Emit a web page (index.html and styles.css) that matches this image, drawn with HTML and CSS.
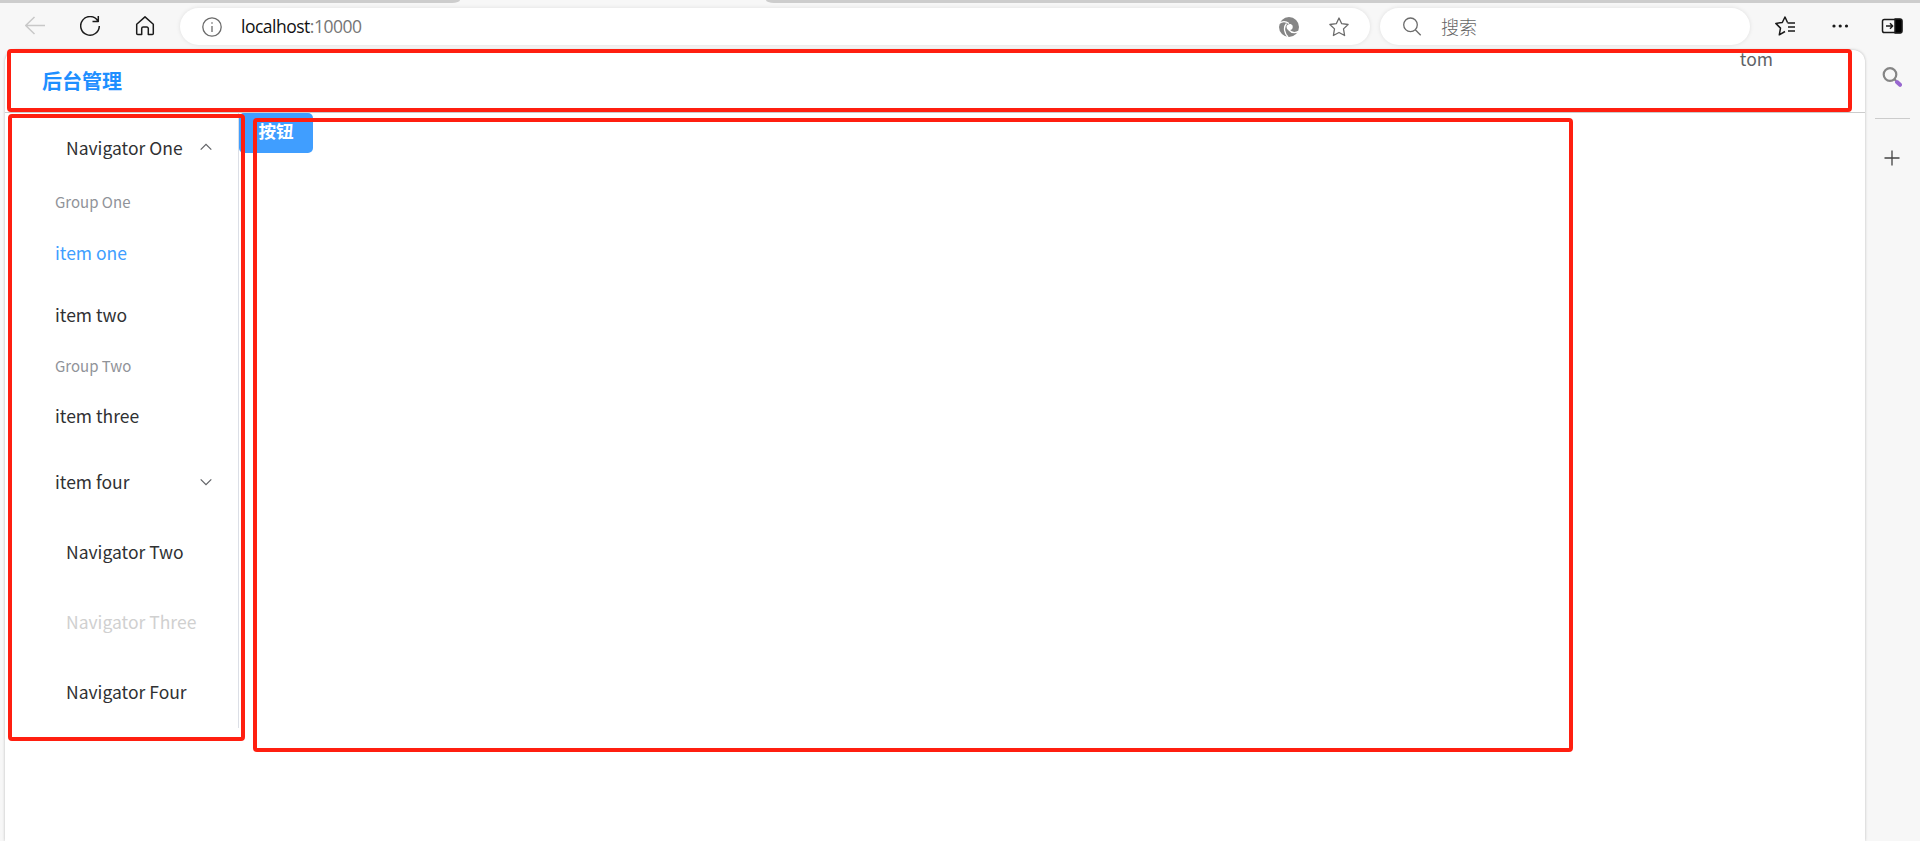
FILE: index.html
```
<!DOCTYPE html>
<html lang="zh-CN">
<head>
    <meta charset="UTF-8">
    <meta name="viewport" content="width=device-width, initial-scale=1.0">
    <title>后台管理</title>
    <link rel="stylesheet" href="styles.css">
</head>
<body>

<!-- Browser tabs and toolbar -->
<div class="tabs">
    <div class="tab tab-left"></div>
    <div class="tab tab-right"></div>
</div>
<div class="toolbar">
    <div class="nav-buttons">
        <svg class="icon back" viewBox="0 0 20 20"><path d="M20 9.5H.7M9.5 1L.7 9.5 9.5 18"/></svg>
        <svg class="icon" viewBox="0 0 20 20"><path d="M17.8 4.8A9.3 9.3 0 1 0 19.3 10M18.3 0v5.5h-5.8"/></svg>
        <svg class="icon" viewBox="0 0 20 20"><path d="M1.7 8.2L10 .9l8.3 7.3v9.3a1 1 0 0 1-1 1h-4v-6a1.5 1.5 0 0 0-1.5-1.5H8.2a1.5 1.5 0 0 0-1.5 1.5v6h-4a1 1 0 0 1-1-1z"/></svg>
    </div>
    <div class="address-bar">
        <svg class="icon gray" viewBox="0 0 20 20"><circle cx="10" cy="10" r="9.2"/><path d="M10 9v6M10 5.2v1.6"/></svg>
        <span class="url">localhost<span class="port">:10000</span></span>
        <svg class="icon swirl" viewBox="0 0 20 20">
            <circle cx="10" cy="10" r="10"/>
            <path class="cut" d="M0 6.500C3 4.300 7 4.300 10 6.500M7.500 6.500C4 10.500 5.500 16.500 9 20M20 14C16 16.500 12 15.500 9.500 12.500"/>
            <path class="hole" d="M7.500 9.500C8 6.500 12.500 6 13.500 8.500C14.500 12 12 13.500 9.500 13C8 12.500 7.500 11 7.500 9.500z"/>
        </svg>
        <svg class="icon gray" viewBox="0 0 20 20"><path d="M10 1l2.700 5.700 6.400.8-4.600 4.400 1.100 6.600L10 15.500l-5.600 3 1.100-6.600L.9 7.500l6.400-.8z"/></svg>
    </div>
    <div class="search-bar">
        <svg class="icon gray" viewBox="0 0 20 20"><circle cx="8.500" cy="7.800" r="6.800"/><path d="M13.300 12.700l5.400 5.600"/></svg>
        <span class="placeholder">搜索</span>
    </div>
    <div class="tool-buttons">
        <svg class="icon" viewBox="0 0 20 20"><path d="M12.500 6.500L10 1 7.300 6.500.8 7.400l4.700 4.700-1.200 6.700 5.700-3.300M12.500 7H20M13 11h7M13 15h7"/></svg>
        <svg class="icon dots" viewBox="0 0 20 20"><circle cx="4" cy="10" r="1.600"/><circle cx="10.200" cy="10" r="1.600"/><circle cx="16.500" cy="10" r="1.600"/></svg>
        <svg class="icon panel" viewBox="0 0 22 20"><rect x="1.500" y="3.500" width="19" height="13" rx="1.800"/><path d="M5 10h6.500M9 7.300l2.700 2.700L9 12.700"/><path class="fill" d="M14 3h5a2 2 0 0 1 2 2v10a2 2 0 0 1-2 2h-5z"/></svg>
    </div>
</div>

<div class="main">
    <!-- Web page -->
    <div class="page">
        <div class="header">
            <div class="title">后台管理</div>
            <div class="user">tom</div>
        </div>
        <div class="container">
            <ul class="menu">
                <li class="submenu">Navigator One
                    <svg class="arrow" viewBox="0 0 12 8"><path d="M.7 6.700L6 1.300l5.300 5.400"/></svg>
                </li>
                <li class="group">Group One</li>
                <li class="item active">item one</li>
                <li class="item">item two</li>
                <li class="group">Group Two</li>
                <li class="item">item three</li>
                <li class="submenu inner">item four
                    <svg class="arrow" viewBox="0 0 12 8"><path d="M.7 1.300L6 6.700l5.300-5.400"/></svg>
                </li>
                <li class="submenu">Navigator Two</li>
                <li class="submenu disabled">Navigator Three</li>
                <li class="submenu">Navigator Four</li>
            </ul>
            <button class="btn">按钮</button>
        </div>
    </div>

    <!-- Browser sidebar -->
    <div class="sidebar">
        <svg class="magnifier" viewBox="0 0 20 20"><circle cx="8" cy="7.500" r="6.300"/><path d="M12.200 12l2 2"/><path class="handle" d="M15 15l3 2.800"/></svg>
        <hr>
        <svg class="plus" viewBox="0 0 16 16"><path d="M8 .5v15M.5 8h15"/></svg>
    </div>
</div>

<!-- Region marks -->
<div class="mark mark-header"></div>
<div class="mark mark-menu"></div>
<div class="mark mark-content"></div>

</body>
</html>
```
FILE: styles.css
```
* {
    box-sizing: border-box;
}
body {
    margin: 0;
    height: 841px;
    overflow: hidden;
    display: flex;
    flex-direction: column;
    background-color: #f7f7f7;
    font-family: "Noto Sans CJK SC", sans-serif;
}

/* Browser top */
.tabs {
    display: flex;
    justify-content: space-between;
    height: 3px;
}
.tab {
    background-color: #cdcdcd;
}
.tab-left {
    width: 460px;
    border-bottom-right-radius: 8px 3px;
}
.tab-right {
    width: 1154px;
    border-bottom-left-radius: 8px 3px;
}
.toolbar {
    display: flex;
    height: 47px;
    padding: 5px 17px 0 25px;
}
.icon {
    width: 20px;
    height: 20px;
    flex: none;
    fill: none;
    stroke: #1b1b1b;
    stroke-width: 1.5;
    stroke-linejoin: round;
}
.nav-buttons {
    display: flex;
    gap: 35px;
    width: 155px;
    padding-top: 8px;
}
.back {
    stroke: #c8c8c8;
}
.gray {
    stroke: #6b6b6b;
    stroke-width: 1.3;
}
.address-bar,
.search-bar {
    display: flex;
    align-items: center;
    height: 37px;
    border-radius: 19px;
    background: white;
    box-shadow: 0 0 4px rgba(0, 0, 0, 0.1);
}
.address-bar {
    width: 1190px;
    padding: 0 21px 0 22px;
    gap: 30px;
}
.url {
    flex: 1;
    margin-left: -11px;
    padding-bottom: 2px;
    font-family: "Open Sans", sans-serif;
    font-size: 17.5px;
    letter-spacing: -0.5px;
    color: #111;
}
.port {
    color: #767676;
}
.swirl {
    fill: #858585;
    stroke: none;
}
.swirl .cut {
    fill: none;
    stroke: white;
    stroke-width: 1.3;
}
.swirl .hole {
    fill: white;
}
.search-bar {
    width: 370px;
    margin-left: 10px;
    padding-left: 22px;
    gap: 19px;
    font-size: 18px;
    font-weight: 300;
    color: #666;
}
.placeholder {
    padding-bottom: 2px;
}
.tool-buttons {
    display: flex;
    flex: 1;
    padding: 8px 0 0 25px;
}
.dots {
    margin: 0 31px 0 35px;
    fill: #1b1b1b;
    stroke: none;
}
.panel {
    width: 22px;
}
.panel .fill {
    fill: #000;
}

/* Page */
.main {
    display: flex;
    flex: 1;
}
.page {
    width: 1860px;
    margin-left: 5px;
    background: white;
    border-radius: 12px 12px 0 0;
    box-shadow: 0 0 3px rgba(0, 0, 0, 0.25);
}
.header {
    display: flex;
    justify-content: space-between;
    height: 63px;
    padding: 0 92px 0 37px;
    border-bottom: 1px solid #ccc;
}
.title {
    line-height: 61px;
    font-size: 20px;
    font-weight: bold;
    color: #1e8fff;
}
.user {
    line-height: 18px;
    font-size: 17.5px;
    color: #606266;
}
.container {
    display: flex;
    align-items: flex-start;
}
.menu {
    width: 234px;
    margin: 0;
    padding: 0;
    list-style: none;
    border-right: 1px solid #dcdfe6;
    font-size: 17.5px;
    color: #303133;
}
.submenu {
    display: flex;
    align-items: center;
    justify-content: space-between;
    height: 70px;
    padding: 0 26px 2px 61px;
}
.inner {
    padding-left: 50px;
}
.item {
    height: 62.5px;
    line-height: 62.5px;
    padding-left: 50px;
}
.group {
    height: 38.5px;
    padding: 7px 0 0 50px;
    line-height: 24px;
    font-size: 15px;
    color: #909399;
}
.active {
    line-height: 61px;
    color: #409eff;
}
.disabled {
    color: #d0d0d0;
}
.arrow {
    width: 12px;
    height: 8px;
    fill: none;
    stroke: #606266;
    stroke-width: 1.2;
}
.btn {
    width: 74px;
    height: 40px;
    padding: 0 0 6px;
    border: none;
    border-radius: 5px;
    background-color: #409eff;
    color: white;
    font-family: inherit;
    font-size: 17.5px;
    font-weight: bold;
}

/* Browser sidebar */
.sidebar {
    display: flex;
    flex-direction: column;
    align-items: center;
    width: 54px;
    padding-top: 17px;
}
.sidebar hr {
    width: 35px;
    margin: 31px 0;
    border: none;
    border-top: 1px solid #ccc;
}
.magnifier {
    width: 20px;
    height: 20px;
    fill: none;
    stroke: #858585;
    stroke-width: 2.2;
}
.magnifier .handle {
    stroke: #9867cf;
    stroke-width: 4;
    stroke-linecap: round;
}
.plus {
    width: 16px;
    height: 16px;
    stroke: #444;
    stroke-width: 1.3;
}

/* Red frames drawn over the page */
.mark {
    position: absolute;
    border: 4px solid #ff1f10;
    border-radius: 4px;
}
.mark-header {
    left: 7px;
    top: 49px;
    width: 1845px;
    height: 63px;
}
.mark-menu {
    left: 8px;
    top: 114px;
    width: 237px;
    height: 627px;
}
.mark-content {
    left: 253px;
    top: 118px;
    width: 1320px;
    height: 634px;
}
```
